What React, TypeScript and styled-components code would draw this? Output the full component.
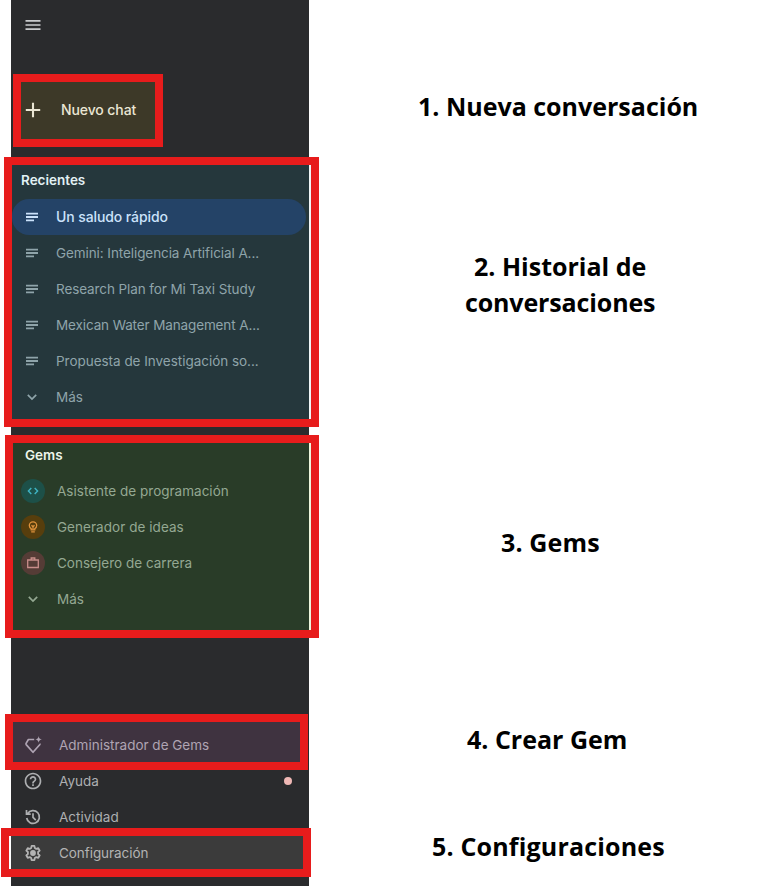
import React from "react";
import styled, { createGlobalStyle } from "styled-components";
import { MdHelpOutline, MdMenu } from "react-icons/md";

const GlobalStyle = createGlobalStyle`
  * { box-sizing: border-box; }
  body { margin: 0; background: #fff; }
`;

const Page = styled.main`
  display: flex;
  width: 761px;
  height: 886px;
  overflow: hidden;
  font-family: Inter, sans-serif;
`;

const Sidebar = styled.aside`
  display: flex;
  flex-direction: column;
  align-items: flex-start;
  width: 298px;
  height: 886px;
  margin-left: 11px;
  background: #2a2b2d;
`;

const MenuBar = styled.header`
  display: flex;
  height: 82px;
  padding: 15px 12px;
  color: #c9cbcd;
`;

/* A tinted area of the sidebar that carries a red outline. */
const Area = styled.section<{ $bg: string; $left?: number; $width: number; $height: number; $gap?: number }>`
  position: relative;
  flex: none;
  width: ${(p) => p.$width}px;
  height: ${(p) => p.$height}px;
  margin-left: ${(p) => p.$left ?? 0}px;
  margin-top: ${(p) => p.$gap ?? 0}px;
  background: ${(p) => p.$bg};
`;

const Outline = styled.div<{ $left?: number; $right?: number; $strip?: string }>`
  position: absolute;
  top: -8px;
  bottom: -8px;
  left: -${(p) => p.$left ?? 8}px;
  right: -${(p) => p.$right ?? 8}px;
  border: 8px solid #e71c1c;
  box-shadow: ${(p) => (p.$strip ? `inset -2px 0 0 ${p.$strip}` : "none")};
  pointer-events: none;
`;

const NewChat = styled.div`
  display: flex;
  align-items: center;
  height: 56px;
  padding-left: 2px;
  gap: 18px;
  color: #eae6d4;
  font-size: 14px;
  font-weight: 500;
  line-height: 18px;
  letter-spacing: -0.1px;
`;

const Heading = styled.h2<{ $inset: number; $color: string; $height: number }>`
  margin: 0;
  padding-left: ${(p) => p.$inset}px;
  color: ${(p) => p.$color};
  font-size: 13.5px;
  font-weight: 600;
  line-height: ${(p) => p.$height}px;
`;

const Row = styled.div<{ $color: string; $iconBox: number; $gap: number; $pad: number; $track?: number }>`
  display: grid;
  grid-template-columns: ${(p) => p.$iconBox}px 1fr auto;
  align-items: center;
  column-gap: ${(p) => p.$gap}px;
  height: 36px;
  padding-left: ${(p) => p.$pad}px;
  color: ${(p) => p.$color};
  font-size: 13.5px;
  letter-spacing: ${(p) => p.$track ?? 0}px;
  white-space: nowrap;

  svg { display: block; }
`;

const RecentList = styled.div`
  padding-top: 4px;
`;

const ActiveRow = styled(Row)`
  width: 294px;
  border-radius: 17px 18px 18px 17px;
  background: #244367;
  font-size: 14px;
  font-weight: 500;
  line-height: 18px;
  letter-spacing: -0.1px;
`;

const GemList = styled.div`
  padding-top: 6px;
`;

const GemBadge = styled.span<{ $bg: string; $color: string }>`
  display: flex;
  align-items: center;
  justify-content: center;
  width: 24px;
  height: 24px;
  border-radius: 50%;
  background: ${(p) => p.$bg};
  color: ${(p) => p.$color};
`;

const FooterRows = styled.div`
  width: 298px;
  height: 74px;
  padding-top: 1px;
`;

const ManagerRow = styled.div`
  padding-top: 5px;
`;

const SettingsRow = styled(Row)`
  height: 34px;
`;

const Dot = styled.span`
  width: 8px;
  height: 8px;
  margin-right: 17px;
  border-radius: 50%;
  background: #efb8b5;
`;

const Labels = styled.div`
  display: flex;
  flex-direction: column;
  align-items: flex-start;
`;

const Label = styled.p<{ $left: number; $gap: number; $track?: number }>`
  margin: ${(p) => p.$gap}px 0 0 ${(p) => p.$left}px;
  color: #000;
  font: 700 25px/36px "Open Sans", sans-serif;
  letter-spacing: ${(p) => p.$track ?? 0}px;
  text-align: center;
  white-space: nowrap;
`;

const Tight = styled.span`
  letter-spacing: -0.13px;
`;

const PlusIcon = () => (
  <svg width="20" height="20" viewBox="0 0 20 20" fill="none" stroke="currentColor" strokeWidth="2.1">
    <path d="M10 2.800v14.400M2.800 10h14.400" />
  </svg>
);

const NotesIcon = () => (
  <svg width="20" height="20" viewBox="0 0 20 20" fill="currentColor">
    <path d="M4 5.800h12v1.800H4zM4 9.100h12v1.800H4zM4 12.400h8v1.800H4z" />
  </svg>
);

const ChevronIcon = () => (
  <svg width="20" height="20" viewBox="0 0 20 20" fill="none" stroke="currentColor" strokeWidth="1.700">
    <path d="M5.800 7.900 10 12l4.200-4.100" />
  </svg>
);

const CodeIcon = () => (
  <svg width="16" height="16" viewBox="0 0 16 16" fill="none" stroke="currentColor" strokeWidth="1.400">
    <path d="M6.300 5 3.400 8l2.900 3M9.700 5 12.600 8l-2.900 3" />
  </svg>
);

const BulbIcon = () => (
  <svg width="16" height="16" viewBox="0 0 16 16" fill="none" stroke="currentColor" strokeWidth="1.300">
    <path d="M6.200 10.800V9.600C5.100 9 4.300 8 4.300 6.600a3.700 3.700 0 0 1 7.400 0c0 1.400-.8 2.400-1.900 3v1.200z" />
    <path d="M6.200 12.900h3.600M8 10.800V7.800M6.500 6.300 8 7.800l1.500-1.500" />
  </svg>
);

const CaseIcon = () => (
  <svg width="16" height="16" viewBox="0 0 16 16" fill="none" stroke="currentColor" strokeWidth="1.300">
    <path d="M2.700 5h10.600v7.500H2.700zM6.200 5V3h3.600v2" />
  </svg>
);

const GemIcon = () => (
  <svg width="20" height="20" viewBox="0 0 20 20" fill="none" stroke="currentColor" strokeWidth="1.700" strokeLinejoin="round">
    <path d="M11.200 4.500H5.400L3.100 8.400q-.3.700.1 1.200L10 17.300l6.700-7.500q.4-.5.100-1.100" />
    <path d="M15.600 1c.3 2.200 1.200 3.100 3.300 3.400-2.100.3-3 1.200-3.300 3.400-.3-2.200-1.200-3.100-3.300-3.400 2.100-.3 3-1.200 3.300-3.400z" fill="currentColor" stroke="none" />
  </svg>
);

const HistoryIcon = () => (
  <svg width="20" height="20" viewBox="0 0 20 20" fill="none" stroke="currentColor" strokeWidth="1.700">
    <path d="M3.700 11A6.400 6.400 0 1 0 4.600 6.600M3.500 2.900v4.200h4.200" />
    <path d="M10 6.300v4l2.800 2.800" />
  </svg>
);

const SettingsIcon = () => (
  <svg width="20" height="20" viewBox="0 0 20 20" fill="none" stroke="currentColor" strokeWidth="1.800" strokeLinejoin="round">
    <path d="M8.600 2.900h2.800l.4 2.100 1.500.9 2-.7 1.400 2.400-1.600 1.400v2l1.600 1.400-1.400 2.400-2-.7-1.500.9-.4 2.100H8.600L8.200 15l-1.500-.9-2 .7-1.400-2.400L4.900 11V9L3.300 7.600l1.400-2.400 2 .7L8.200 5z" />
    <circle cx="10" cy="10" r="2.900" fill="currentColor" stroke="none" />
  </svg>
);

const recents = [
  { title: "Gemini: Inteligencia Artificial A...", track: -0.08 },
  { title: "Research Plan for Mi Taxi Study", track: -0.1 },
  { title: "Mexican Water Management A...", track: -0.12 },
  { title: "Propuesta de Investigación so...", track: -0.03 },
];

const gems = [
  { title: "Asistente de programación", bg: "#1d5048", color: "#3fb4c4", icon: <CodeIcon />, track: 0.01 },
  { title: "Generador de ideas", bg: "#573e0d", color: "#e0933c", icon: <BulbIcon />, track: 0.05 },
  { title: "Consejero de carrera", bg: "#553c36", color: "#c98e8b", icon: <CaseIcon />, track: 0.01 },
];

export default function App() {
  return (
    <Page>
      <GlobalStyle />
      <Sidebar>
        <MenuBar>
          <MdMenu size={20} />
        </MenuBar>

        <Area $bg="#3d3928" $left={10} $width={134} $height={57}>
          <NewChat>
            <PlusIcon />
            Nuevo chat
          </NewChat>
          <Outline />
        </Area>

        <Area $bg="#25373c" $left={1} $width={297} $height={254} $gap={26}>
          <Heading $inset={9} $height={30} $color="#e2f1f5">Recientes</Heading>
          <RecentList>
            <ActiveRow $color="#cbe2fb" $iconBox={20} $gap={14} $pad={10}>
              <NotesIcon />
              Un saludo rápido
            </ActiveRow>
            {recents.map((r) => (
              <Row key={r.title} $color="#8fa4aa" $iconBox={20} $gap={14} $pad={10} $track={r.track}>
                <NotesIcon />
                {r.title}
              </Row>
            ))}
            <Row $color="#8fa4aa" $iconBox={20} $gap={14} $pad={10}>
              <ChevronIcon />
              Más
            </Row>
          </RecentList>
          <Outline $right={10} $strip="#f0f5f6" />
        </Area>

        <Area $bg="#293c28" $left={2} $width={296} $height={187} $gap={24}>
          <Heading $inset={12} $height={24} $color="#edf6ea">Gems</Heading>
          <GemList>
            {gems.map((g) => (
              <Row key={g.title} $color="#94a892" $iconBox={24} $gap={12} $pad={8} $track={g.track}>
                <GemBadge $bg={g.bg} $color={g.color}>{g.icon}</GemBadge>
                {g.title}
              </Row>
            ))}
            <Row $color="#94a892" $iconBox={20} $gap={14} $pad={10}>
              <ChevronIcon />
              Más
            </Row>
          </GemList>
          <Outline $right={10} $strip="#edf5dd" />
        </Area>

        <Area $bg="#3f3340" $left={2} $width={287} $height={40} $gap={92}>
          <ManagerRow>
            <Row $color="#afa4b3" $iconBox={20} $gap={16} $pad={10}>
              <GemIcon />
              Administrador de Gems
            </Row>
          </ManagerRow>
          <Outline />
        </Area>

        <FooterRows>
          <Row $color="#adafb1" $iconBox={20} $gap={16} $pad={12}>
            <MdHelpOutline size={20} />
            Ayuda
            <Dot />
          </Row>
          <Row $color="#adafb1" $iconBox={20} $gap={16} $pad={12}>
            <HistoryIcon />
            Actividad
          </Row>
        </FooterRows>

        <Area $bg="#3b3b3b" $width={292} $height={33}>
          <SettingsRow $color="#b3b3b3" $iconBox={20} $gap={16} $pad={12} $track={-0.06}>
            <SettingsIcon />
            Configuración
          </SettingsRow>
          <Outline $left={10} />
        </Area>
      </Sidebar>

      <Labels>
        <Label $left={109} $gap={88}>1. Nueva conversación</Label>
        <Label $left={156} $gap={124}>
          2. Historial de
          <br />
          <Tight>conversaciones</Tight>
        </Label>
        <Label $left={192} $gap={204} $track={0.15}>3. Gems</Label>
        <Label $left={158} $gap={161}>4. Crear Gem</Label>
        <Label $left={123} $gap={71} $track={0.18}>5. Configuraciones</Label>
      </Labels>
    </Page>
  );
}
